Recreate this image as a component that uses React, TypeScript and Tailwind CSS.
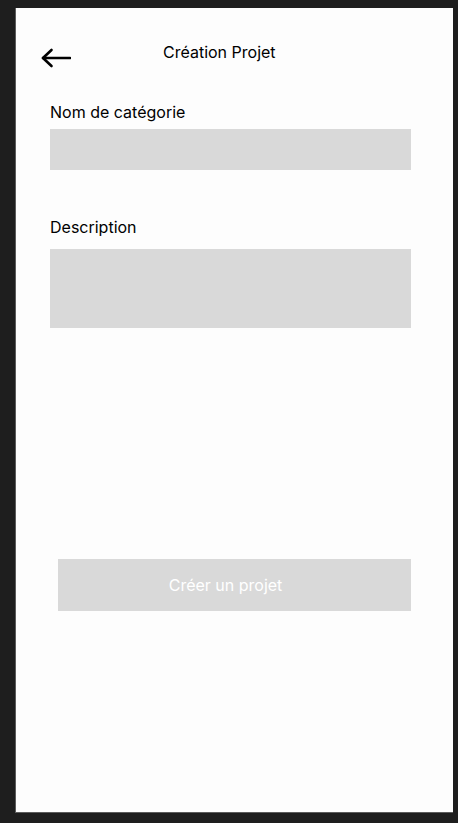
const BackArrow = () => (
  <svg width="30" height="20" viewBox="0 0 30 20" fill="none" stroke="#000" strokeWidth="2.6" strokeLinecap="round" strokeLinejoin="round">
    <path d="M29 10H2" />
    <path d="M10.5 2L2 10l8.5 8" />
  </svg>
);

const App = () => {
  return (
    <div className="min-h-screen bg-[#1e1e1e] pl-[15px] pt-2 font-['Inter',sans-serif]">
      <div className="w-[438px] h-[805px] bg-[#fdfdfd] border-l border-b border-[#5c5c5c]">
        {/* header */}
        <div className="flex items-start pt-[34px] pl-[25px]">
          <button className="mt-[6px]">
            <BackArrow />
          </button>
          <h1 className="ml-[92px] text-base leading-5 text-black">Création Projet</h1>
        </div>

        <form className="flex flex-col pl-[34px] pr-[42px]">
          <label className="mt-[32px] text-base leading-6 text-black">Nom de catégorie</label>
          <input type="text" className="mt-[5px] h-[41px] w-[361px] bg-[#d9d9d9] outline-none" />

          <label className="mt-[45px] text-base leading-6 text-black">Description</label>
          <textarea className="mt-[10px] h-[79px] w-[361px] bg-[#d9d9d9] resize-none outline-none" />

          <button type="button" className="mt-[231px] ml-[8px] h-[52px] w-[353px] pr-[18px] bg-[#d9d9d9] text-base text-white">
            Créer un projet
          </button>
        </form>
      </div>
    </div>
  );
};

export default App;
